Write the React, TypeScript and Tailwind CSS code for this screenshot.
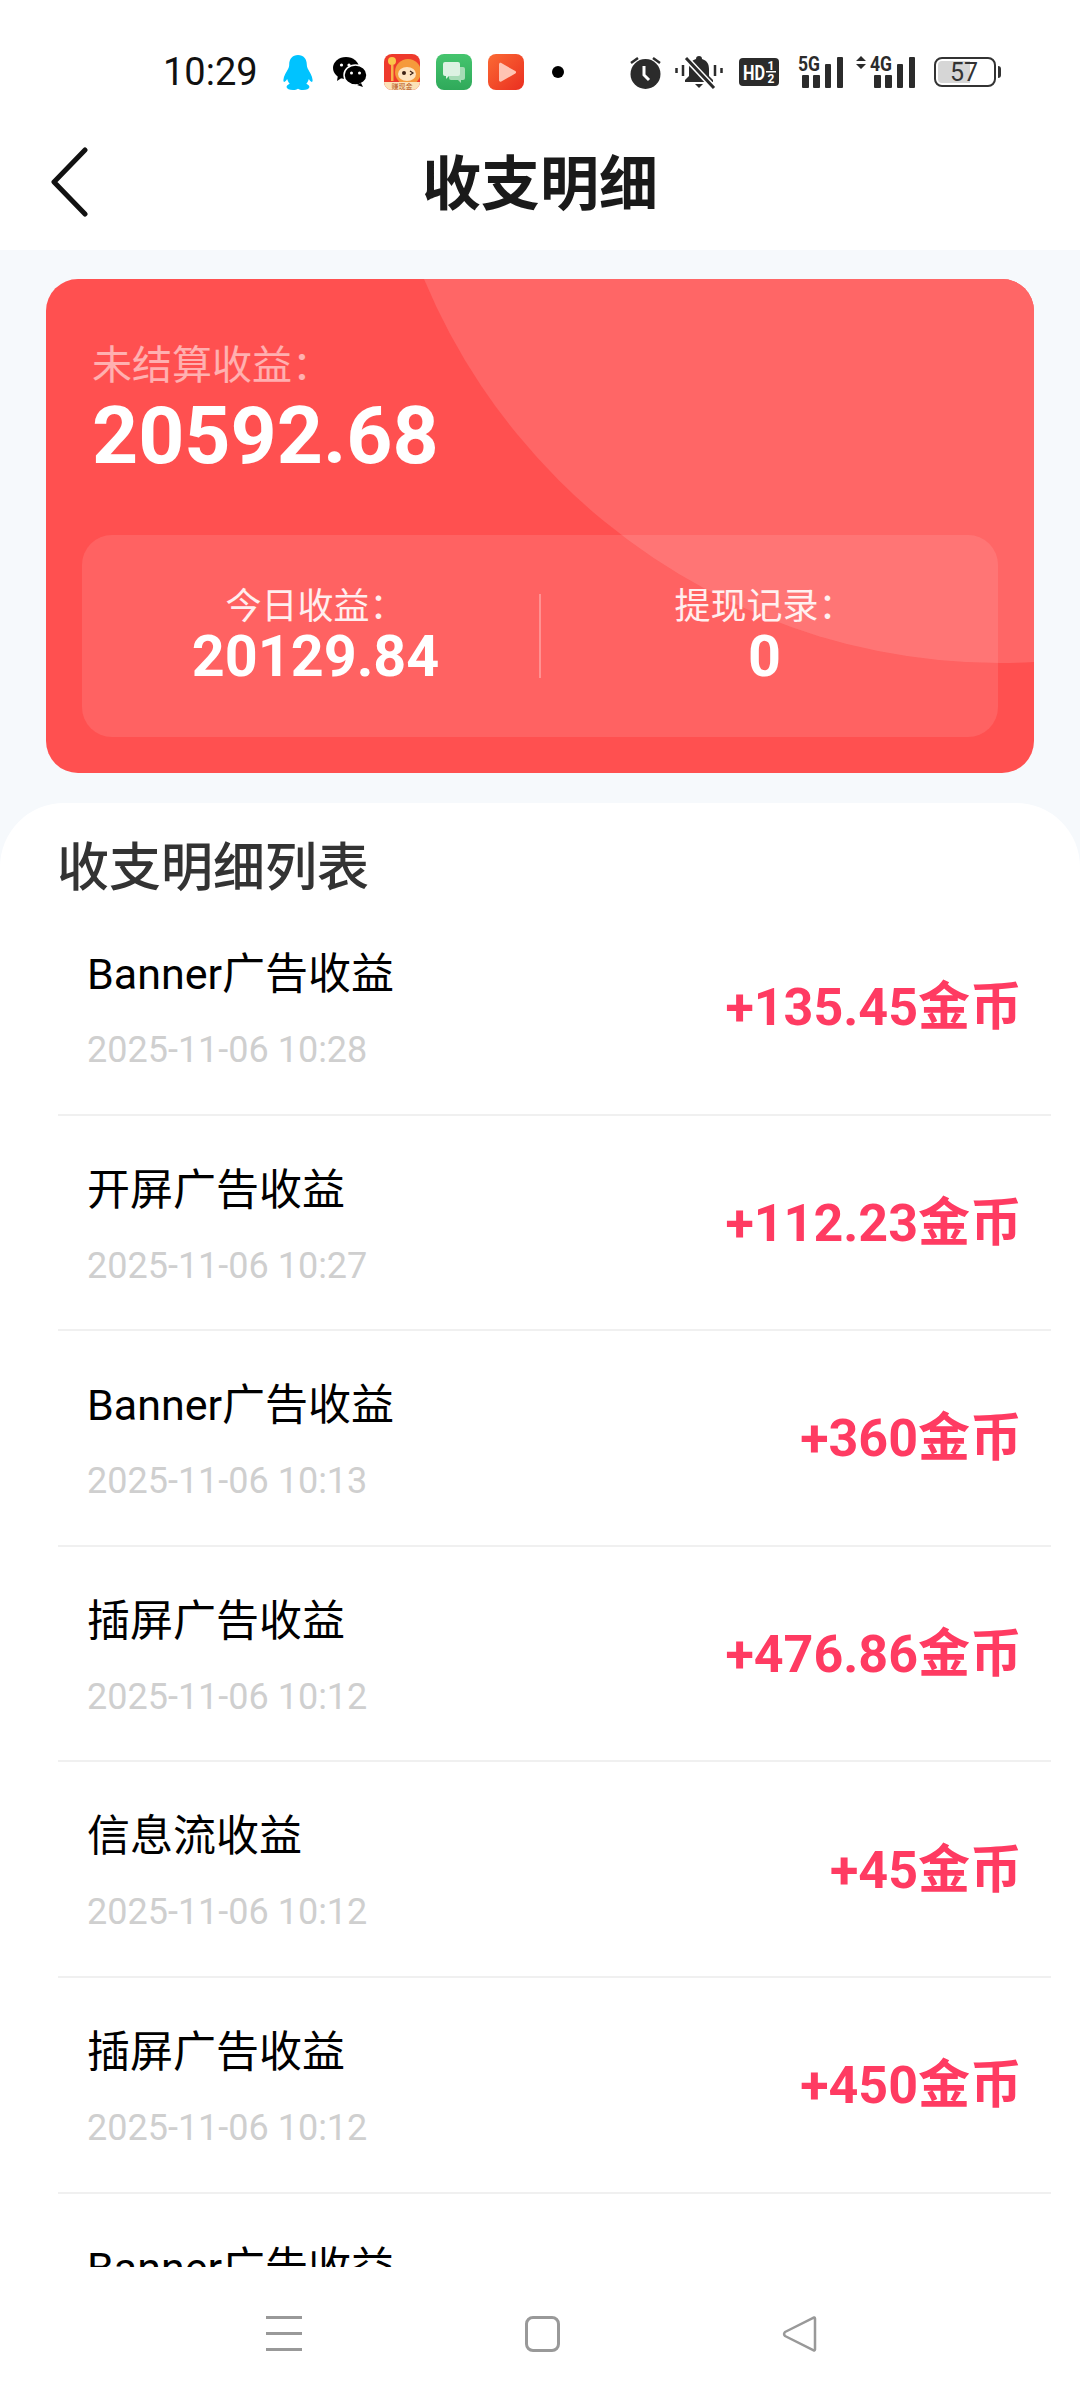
const records = [
  { name: 'Banner广告收益', time: '2025-11-06 10:28', amount: '+135.45金币' },
  { name: '开屏广告收益', time: '2025-11-06 10:27', amount: '+112.23金币' },
  { name: 'Banner广告收益', time: '2025-11-06 10:13', amount: '+360金币' },
  { name: '插屏广告收益', time: '2025-11-06 10:12', amount: '+476.86金币' },
  { name: '信息流收益', time: '2025-11-06 10:12', amount: '+45金币' },
  { name: '插屏广告收益', time: '2025-11-06 10:12', amount: '+450金币' },
  // only the top of this row's name shows above the nav bar
  { name: 'Banner广告收益', time: '', amount: '' },
]

function Penguin() {
  return (
    <svg width="30" height="35" viewBox="0 0 30 35" className="ml-[27px]">
      <path
        fill="#00c3ff"
        d="M15 0c-5.500 0-8.800 4-8.800 9.500 0 1.400-.2 2.800-.9 4C3.500 17 .6 21 .4 25c-.1 1.600.6 2.200 1.300 1.800.8-.4 1.800-1.500 2.500-2.700.4 1.800 1.300 3.400 2.500 4.700-1.800.8-3.400 1.900-3.100 3.500.3 1.600 2.700 2.700 6.400 2.700 2.200 0 3.800-.5 5-1.300 1.200.8 2.800 1.300 5 1.300 3.700 0 6.100-1.100 6.400-2.700.3-1.600-1.300-2.700-3.100-3.500 1.200-1.300 2.100-2.900 2.500-4.700.7 1.200 1.700 2.300 2.500 2.700.7.400 1.400-.2 1.300-1.800-.2-4-3.100-8-4.900-11.500-.7-1.200-.9-2.600-.9-4C23.800 4 20.500 0 15 0z"
      />
    </svg>
  )
}

function WeChat() {
  return (
    <svg width="34" height="30" viewBox="0 0 34 30" className="ml-[20px]">
      <ellipse cx="13" cy="11" rx="13" ry="11" fill="#000" />
      <path d="M5 18l-1 6 6-4z" fill="#000" />
      <ellipse cx="22.500" cy="18" rx="11.500" ry="10" fill="#000" stroke="#fff" strokeWidth="1.500" />
      <path d="M28 26l2 4-6-2z" fill="#000" />
      <circle cx="8.500" cy="8" r="1.600" fill="#fff" />
      <circle cx="16" cy="8" r="1.600" fill="#fff" />
      <circle cx="18.500" cy="16" r="1.500" fill="#fff" />
      <circle cx="26.500" cy="16" r="1.500" fill="#fff" />
    </svg>
  )
}

function MascotApp() {
  return (
    <svg width="36" height="36" viewBox="0 0 36 36" className="ml-[17px]">
      <defs>
        <clipPath id="mascotClip">
          <rect width="36" height="36" rx="8" />
        </clipPath>
      </defs>
      <g clipPath="url(#mascotClip)">
        <rect width="36" height="36" fill="#ee3a2c" />
        <circle cx="24" cy="18" r="13" fill="#f59a3c" />
        <ellipse cx="23" cy="20" rx="9" ry="7" fill="#fde3c0" />
        <circle cx="20" cy="19" r="2" fill="#3b2114" />
        <path d="M26 17l3 2-3 2" fill="none" stroke="#3b2114" strokeWidth="1.200" />
        <circle cx="8" cy="7" r="4" fill="#fbc64b" />
        <rect x="7" y="11" width="2.500" height="16" fill="#f7b24a" />
        <rect y="28" width="36" height="8" fill="#fbe2b8" />
        <text x="18" y="34.500" textAnchor="middle" fontSize="7" fill="#b5561c" className="font-['Noto_Sans_CJK_SC',sans-serif]">
          赚现金
        </text>
      </g>
    </svg>
  )
}

function MessageApp() {
  return (
    <svg width="36" height="36" viewBox="0 0 36 36" className="ml-[16px]">
      <defs>
        <linearGradient id="msgBg" x1="0" y1="0" x2="0" y2="1">
          <stop offset="0" stopColor="#45c56e" />
          <stop offset="1" stopColor="#2fa95a" />
        </linearGradient>
      </defs>
      <rect width="36" height="36" rx="8" fill="url(#msgBg)" />
      <rect x="13" y="13" width="16" height="13" rx="2" fill="#a6dcb6" />
      <path d="M25 26v3l-3-3z" fill="#a6dcb6" />
      <rect x="7" y="8" width="17" height="14" rx="2" fill="#dcf2e2" />
      <path d="M10 22v3l3-3z" fill="#dcf2e2" />
    </svg>
  )
}

function VideoApp() {
  return (
    <svg width="36" height="36" viewBox="0 0 36 36" className="ml-[16px]">
      <defs>
        <linearGradient id="vidBg" x1="0" y1="0" x2="1" y2="1">
          <stop offset="0" stopColor="#fb6a34" />
          <stop offset="1" stopColor="#ea2e20" />
        </linearGradient>
      </defs>
      <rect width="36" height="36" rx="8" fill="url(#vidBg)" />
      <path d="M11 10.500c0-1.400 1.200-2 2.300-1.400l14 8c1 .6 1 1.800 0 2.400l-14 8c-1.100.6-2.300 0-2.300-1.400z" fill="#ffc4b4" />
    </svg>
  )
}

function Alarm() {
  return (
    <svg width="31" height="34" viewBox="0 0 31 34" className="ml-[66px]">
      <circle cx="15.500" cy="19" r="15" fill="#2b2b2b" />
      <path d="M1 8l7-5M30 8l-7-5" stroke="#2b2b2b" strokeWidth="2.500" />
      <path d="M14 11v9l5 5" fill="none" stroke="#fff" strokeWidth="3" />
    </svg>
  )
}

function MutedBell() {
  return (
    <svg width="48" height="34" viewBox="0 0 48 34" className="ml-[14px]">
      <path d="M24 1c-2 0-3 1-3 3-5 1.500-7 5-7 10v7l-4 4v2h28v-2l-4-4v-7c0-5-2-8.500-7-10 0-2-1-3-3-3z" fill="#2b2b2b" />
      <path d="M20 29h8l-4 4z" fill="#2b2b2b" />
      <path d="M9 1l30 32" stroke="#fff" strokeWidth="6" />
      <path d="M11 3l28 30" stroke="#2b2b2b" strokeWidth="3" />
      <path d="M1.500 13v5M8 10v11M40 10v11M46.500 13v5" stroke="#2b2b2b" strokeWidth="2.500" />
    </svg>
  )
}

function HdBadge() {
  return (
    <svg width="40" height="28" viewBox="0 0 40 28" className="ml-[16px] font-['Roboto',sans-serif]">
      <rect width="40" height="28" rx="4" fill="#2b2b2b" />
      <text x="4" y="22" fontSize="20" fontWeight="700" fill="#fff" textLength="22" lengthAdjust="spacingAndGlyphs">
        HD
      </text>
      <text x="32" y="12" fontSize="12" fontWeight="700" fill="#fff" textAnchor="middle">
        1
      </text>
      <rect x="27" y="13" width="10" height="1.500" fill="#fff" />
      <text x="32" y="25" fontSize="12" fontWeight="700" fill="#fff" textAnchor="middle">
        2
      </text>
    </svg>
  )
}

function Signal({ label, arrows }: { label: string; arrows?: boolean }) {
  const off = arrows ? 14 : 0
  return (
    <svg width={46 + off} height="34" viewBox={`0 0 ${46 + off} 34`} className={arrows ? 'ml-[12px] font-["Roboto",sans-serif]' : 'ml-[19px] font-["Roboto",sans-serif]'}>
      {arrows && <path d="M5 1l5 5H0zM5 14l5-5H0z" fill="#2b2b2b" />}
      <text x={off} y="16" fontSize="21" fontWeight="700" fill="#2b2b2b" textLength="22" lengthAdjust="spacingAndGlyphs">
        {label}
      </text>
      <rect x={off + 4} y="20" width="7" height="13" rx="1" fill="#2b2b2b" />
      <rect x={off + 15} y="20" width="7" height="13" rx="1" fill="#2b2b2b" />
      <rect x={off + 27} y="9" width="6" height="24" rx="1" fill="#2b2b2b" />
      <rect x={off + 39} y="2" width="6" height="31" rx="1" fill="#2b2b2b" />
    </svg>
  )
}

function Battery() {
  return (
    <div className="ml-[18px] flex items-center">
      <div className="relative flex h-[30px] w-[62px] items-center overflow-hidden rounded-[8px] border-[2.500px] border-[#333]">
        <div className="absolute inset-y-[2px] left-[2px] w-[32px] rounded-l-[4px] bg-[#d6d6d6]" />
        <span className="relative ml-[14px] text-[25px] leading-none text-[#333]">57</span>
      </div>
      <div className="ml-[2px] h-[12px] w-[3px] rounded-r-full bg-[#333]" />
    </div>
  )
}

function StatusBar() {
  return (
    <div className="flex h-[144px] shrink-0 items-center pl-[163px]">
      <span className="w-[93px] text-[38px] leading-none text-[#111]">10:29</span>
      <Penguin />
      <WeChat />
      <MascotApp />
      <MessageApp />
      <VideoApp />
      <div className="ml-[28px] h-[12px] w-[12px] rounded-full bg-black" />
      <Alarm />
      <MutedBell />
      <HdBadge />
      <Signal label="5G" />
      <Signal label="4G" arrows />
      <Battery />
    </div>
  )
}

function StatBlock({ label, value }: { label: string; value: string }) {
  return (
    <div className="flex flex-1 flex-col items-center">
      <span className="text-[36px] leading-[40px] text-white/90">{label}</span>
      <span className="mt-[1px] text-[57.500px] font-bold leading-[58px] text-white">{value}</span>
    </div>
  )
}

export default function App() {
  return (
    <div className="flex h-[2400px] w-[1080px] flex-col overflow-hidden bg-[#f6f9fc] font-['Roboto','Noto_Sans_CJK_SC',sans-serif]">
      <div className="shrink-0 bg-white">
        <StatusBar />
        {/* Title bar */}
        <div className="relative flex h-[106px] items-center justify-center pb-[26px]">
          <svg width="40" height="70" viewBox="0 0 40 70" className="absolute left-[50px] top-[3px]">
            <path d="M35 3L4 35l31 32" fill="none" stroke="#111" strokeWidth="5" strokeLinecap="round" strokeLinejoin="round" />
          </svg>
          <h1 className="text-[59px] font-bold leading-none text-[#1a1a1a]">收支明细</h1>
        </div>
      </div>

      {/* Balance card */}
      <div className="relative mx-[46px] mt-[29px] h-[494px] shrink-0 overflow-hidden rounded-[32px] bg-[#ff5050]">
        <div className="absolute left-[330px] top-[-864px] h-[1248px] w-[1248px] rounded-full bg-[#ff6666]" />
        <div className="relative pl-[46px] pt-[62px]">
          <p className="text-[40px] leading-[50px] text-white/55">未结算收益：</p>
          <p className="text-[80.500px] font-bold leading-[90px] text-white">20592.68</p>
        </div>
        <div className="relative mx-[36px] mt-[54px] flex h-[202px] items-center rounded-[30px] bg-white/10 px-[10px]">
          <StatBlock label="今日收益：" value="20129.84" />
          <div className="h-[84px] w-[2px] bg-white/30" />
          <StatBlock label="提现记录：" value="0" />
        </div>
      </div>

      {/* Record list */}
      <div className="mt-[30px] min-h-0 flex-1 overflow-hidden rounded-t-[64px] bg-white px-[58px]">
        <h2 className="-ml-px flex h-[97px] items-center pt-[34px] text-[52px] font-medium leading-none text-[#333]">收支明细列表</h2>
        <div className="-mr-[29px]">
          {records.map((r, i) => (
            <div key={i} className="flex h-[215.6px] items-center justify-between border-b-2 border-[#f0f0f0] pl-[29px] pr-[29px]">
              <div className="flex h-full flex-col pt-[46px]">
                <span className="text-[43px] leading-[56px] text-black">{r.name}</span>
                {r.time && <span className="mt-[24px] text-[36px] leading-[48px] text-[#cfcfcf]">{r.time}</span>}
              </div>
              {r.amount && <span className="mt-[3px] text-[52px] font-bold leading-none text-[#ff3b62]">{r.amount}</span>}
            </div>
          ))}
        </div>
      </div>

      {/* Navigation bar */}
      <div className="flex h-[133px] shrink-0 items-center bg-white pl-[266px]">
        <div className="flex h-[35px] w-[36px] flex-col justify-between">
          <div className="h-[3px] bg-[#999]" />
          <div className="h-[3px] bg-[#999]" />
          <div className="h-[3px] bg-[#999]" />
        </div>
        <div className="ml-[223px] h-[36px] w-[35px] rounded-[8px] border-[3px] border-[#999]" />
        <svg width="36" height="36" viewBox="0 0 36 36" className="ml-[222px]">
          <path d="M33 2.500v31a1 1 0 0 1-1.800.6L3 20a3 3 0 0 1 0-4L31.200 1.900A1 1 0 0 1 33 2.500z" fill="none" stroke="#999" strokeWidth="2.500" strokeLinejoin="round" />
        </svg>
      </div>
    </div>
  )
}
